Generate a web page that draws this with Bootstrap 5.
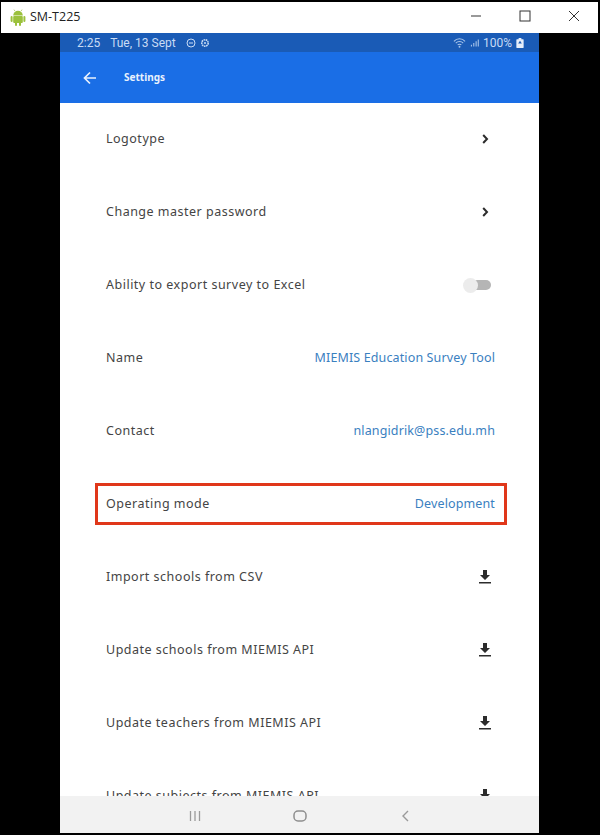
<!DOCTYPE html>
<html lang="en">
<head>
    <meta charset="UTF-8">
    <meta name="viewport" content="width=device-width, initial-scale=1.0">
    <title>SM-T225</title>
    <link href="https://cdn.jsdelivr.net/npm/bootstrap@5.3.0/dist/css/bootstrap.min.css" rel="stylesheet">
    <style>
        html, body { height: 100%; }
        body {
            background: #000;
            overflow: hidden;
            font-family: "Noto Sans", sans-serif;
        }

        .win-frame {
            height: 835px;
            padding: 2px 2px 2px 1px;
        }

        .win-title {
            height: 31px;
            background: #fff;
            padding: 0 10px 0 9px;
            color: #222;
            font-family: "Open Sans", "Noto Sans", sans-serif;
            font-size: 12.5px;
        }

        .win-btns { gap: 37px; padding: 0 8px 3px 0; }

        .win-body { height: 800px; }

        .phone {
            width: 479px;
            margin-left: 59px;
            height: 800px;
            background: #fff;
            overflow: hidden;
            position: relative;
        }

        .status-bar {
            height: 19px;
            background: #1a5bb6;
            color: #c9dcf5;
            font-family: Roboto, sans-serif;
            font-size: 12px;
            padding: 0 15px 0 17px;
        }

        .status-left { gap: 10px; }

        .app-bar {
            height: 51px;
            background: #1a6ee6;
            color: #e8f1fd;
            padding-left: 23px;
            gap: 27px;
            font-size: 10px;
            font-weight: 700;
        }

        .set-row {
            height: 73px;
            padding: 0 44px 0 46px;
            color: #444;
            font-size: 12.5px;
            letter-spacing: .5px;
            position: relative;
        }

        .set-val { color: #3a80bf; letter-spacing: .13px; }

        .row-icon { margin: 0 4px 2px 0; }
        .row-chev { margin: 0 6px 2px 0; }

        .switch-track {
            width: 26px;
            height: 10px;
            background: #b5b5b5;
            border-radius: 5px;
            position: relative;
            margin: 0 4px 2px 0;
        }

        .switch-thumb {
            position: absolute;
            left: -2px;
            top: -2px;
            width: 15px;
            height: 15px;
            border-radius: 50%;
            background: #ececec;
        }

        .red-box {
            position: absolute;
            left: 35px;
            right: 32px;
            top: 15px;
            height: 42px;
            border: 3px solid #e0371a;
        }

        .nav-bottom {
            position: absolute;
            left: 0;
            right: 0;
            bottom: 0;
            height: 37px;
            background: #f2f2f2;
        }

        .nav-slot { width: 105px; text-align: center; }
    </style>
</head>
<body>

<div class="win-frame">
    <!-- title bar -->
    <div class="win-title d-flex align-items-center justify-content-between">
        <div class="d-flex align-items-center gap-1">
            <svg width="16" height="18" viewBox="0 0 16 18">
                <g fill="#9bc13c">
                    <path d="M3.2 6.400a4.800 4.600 0 0 1 9.600 0z"/>
                    <rect x="3.2" y="7" width="9.6" height="7" rx="1"/>
                    <rect x="0.6" y="7" width="2" height="6" rx="1"/>
                    <rect x="13.4" y="7" width="2" height="6" rx="1"/>
                    <rect x="5" y="13" width="2" height="4" rx="1"/>
                    <rect x="9" y="13" width="2" height="4" rx="1"/>
                </g>
                <path d="M5 2.200l-1-1.600M11 2.200l1-1.600" stroke="#9bc13c" stroke-width=".7"/>
            </svg>
            <span>SM-T225</span>
        </div>
        <div class="win-btns d-flex align-items-center">
            <svg width="12" height="12" viewBox="0 0 12 12"><path d="M1 6h10" stroke="#555" stroke-width="1.200"/></svg>
            <svg width="12" height="12" viewBox="0 0 12 12"><rect x="1" y="1" width="10" height="10" fill="none" stroke="#333" stroke-width="1"/></svg>
            <svg width="12" height="12" viewBox="0 0 12 12"><path d="M1 1l10 10M11 1L1 11" stroke="#333" stroke-width="1"/></svg>
        </div>
    </div>

    <div class="win-body">
        <div class="phone">
            <!-- android status bar -->
            <div class="status-bar d-flex align-items-center justify-content-between">
                <div class="status-left d-flex align-items-center">
                    <span>2:25</span>
                    <span>Tue, 13 Sept</span>
                    <span class="d-flex align-items-center gap-1">
                        <svg width="10" height="10" viewBox="0 0 10 10"><circle cx="5" cy="5" r="4" fill="none" stroke="#c9dcf5"/><path d="M3 5h4" stroke="#c9dcf5"/></svg>
                        <svg width="10" height="10" viewBox="0 0 10 10"><circle cx="5" cy="5" r="3.2" fill="none" stroke="#c9dcf5" stroke-width="1.6" stroke-dasharray="1.6 .6"/><circle cx="5" cy="5" r="1" fill="#c9dcf5"/></svg>
                    </span>
                </div>
                <div class="d-flex align-items-center gap-1">
                    <svg width="13" height="10" viewBox="0 0 14 10"><path d="M1 3.200a8 8 0 0 1 12 0M3 5.200a5.400 5.400 0 0 1 8 0M5 7.200a2.600 2.600 0 0 1 4 0" fill="none" stroke="#a9c5ea" stroke-width="1.100"/><circle cx="7" cy="9" r="1" fill="#a9c5ea"/></svg>
                    <svg width="9" height="10" viewBox="0 0 10 10"><path d="M1 7h1.200v2H1zM3.600 5h1.200v4H3.600zM6.200 3h1.200v6H6.200zM8.600 1h1.200v8H8.600z" fill="#a9c5ea"/></svg>
                    <span>100%</span>
                    <svg width="8" height="10" viewBox="0 0 8 11"><path d="M2.500 0h3v1.300H7.500a.5.5 0 0 1 .5.5V10.500a.5.5 0 0 1-.5.5H.5a.5.5 0 0 1-.5-.5V1.800a.5.5 0 0 1 .5-.5h2z" fill="#e6eefa"/><path d="M4 3L2 6h4z" fill="#1a5bb6"/></svg>
                </div>
            </div>

            <!-- app bar -->
            <div class="app-bar d-flex align-items-center">
                <svg width="14" height="14" viewBox="0 0 14 14"><path d="M13 7H2M7 1.500L1.500 7 7 12.500" fill="none" stroke="#e8f1fd" stroke-width="1.700"/></svg>
                <span>Settings</span>
            </div>

            <!-- settings -->
            <div>
                <div class="set-row d-flex align-items-center justify-content-between">
                    <span>Logotype</span>
                    <svg class="row-chev" width="7" height="10" viewBox="0 0 7 10"><path d="M1.200 1L5 5 1.200 9" fill="none" stroke="#2c2c2c" stroke-width="2"/></svg>
                </div>
                <div class="set-row d-flex align-items-center justify-content-between">
                    <span>Change master password</span>
                    <svg class="row-chev" width="7" height="10" viewBox="0 0 7 10"><path d="M1.200 1L5 5 1.200 9" fill="none" stroke="#2c2c2c" stroke-width="2"/></svg>
                </div>
                <div class="set-row d-flex align-items-center justify-content-between">
                    <span>Ability to export survey to Excel</span>
                    <div class="switch-track"><div class="switch-thumb"></div></div>
                </div>
                <div class="set-row d-flex align-items-center justify-content-between">
                    <span>Name</span>
                    <span class="set-val">MIEMIS Education Survey Tool</span>
                </div>
                <div class="set-row d-flex align-items-center justify-content-between">
                    <span>Contact</span>
                    <span class="set-val">nlangidrik@pss.edu.mh</span>
                </div>
                <div class="set-row d-flex align-items-center justify-content-between">
                    <span>Operating mode</span>
                    <span class="set-val">Development</span>
                    <div class="red-box"></div>
                </div>
                <div class="set-row d-flex align-items-center justify-content-between">
                    <span>Import schools from CSV</span>
                    <svg class="row-icon" width="12" height="14" viewBox="0 0 12 14"><path d="M4 0h4v5h3L6 10 1 5h3zM0 12h12v1.600H0z" fill="#2c2c2c"/></svg>
                </div>
                <div class="set-row d-flex align-items-center justify-content-between">
                    <span>Update schools from MIEMIS API</span>
                    <svg class="row-icon" width="12" height="14" viewBox="0 0 12 14"><path d="M4 0h4v5h3L6 10 1 5h3zM0 12h12v1.600H0z" fill="#2c2c2c"/></svg>
                </div>
                <div class="set-row d-flex align-items-center justify-content-between">
                    <span>Update teachers from MIEMIS API</span>
                    <svg class="row-icon" width="12" height="14" viewBox="0 0 12 14"><path d="M4 0h4v5h3L6 10 1 5h3zM0 12h12v1.600H0z" fill="#2c2c2c"/></svg>
                </div>
                <div class="set-row d-flex align-items-center justify-content-between">
                    <span>Update subjects from MIEMIS API</span>
                    <svg class="row-icon" width="12" height="14" viewBox="0 0 12 14"><path d="M4 0h4v5h3L6 10 1 5h3zM0 12h12v1.600H0z" fill="#2c2c2c"/></svg>
                </div>
            </div>

            <!-- android nav buttons -->
            <div class="nav-bottom d-flex align-items-center justify-content-center">
                <div class="nav-slot">
                    <svg width="12" height="12" viewBox="0 0 12 12"><path d="M1.500 1v10M6 1v10M10.500 1v10" stroke="#9a9a9a" stroke-width="1.300"/></svg>
                </div>
                <div class="nav-slot">
                    <svg width="14" height="12" viewBox="0 0 14 12"><rect x="1" y="1" width="12" height="10" rx="4" fill="none" stroke="#8e8e8e" stroke-width="1.500"/></svg>
                </div>
                <div class="nav-slot">
                    <svg width="8" height="12" viewBox="0 0 8 12"><path d="M7 1L2 6l5 5" fill="none" stroke="#9a9a9a" stroke-width="1.400"/></svg>
                </div>
            </div>
        </div>
    </div>
</div>

<script src="https://cdn.jsdelivr.net/npm/bootstrap@5.3.0/dist/js/bootstrap.bundle.min.js"></script>
</body>
</html>
